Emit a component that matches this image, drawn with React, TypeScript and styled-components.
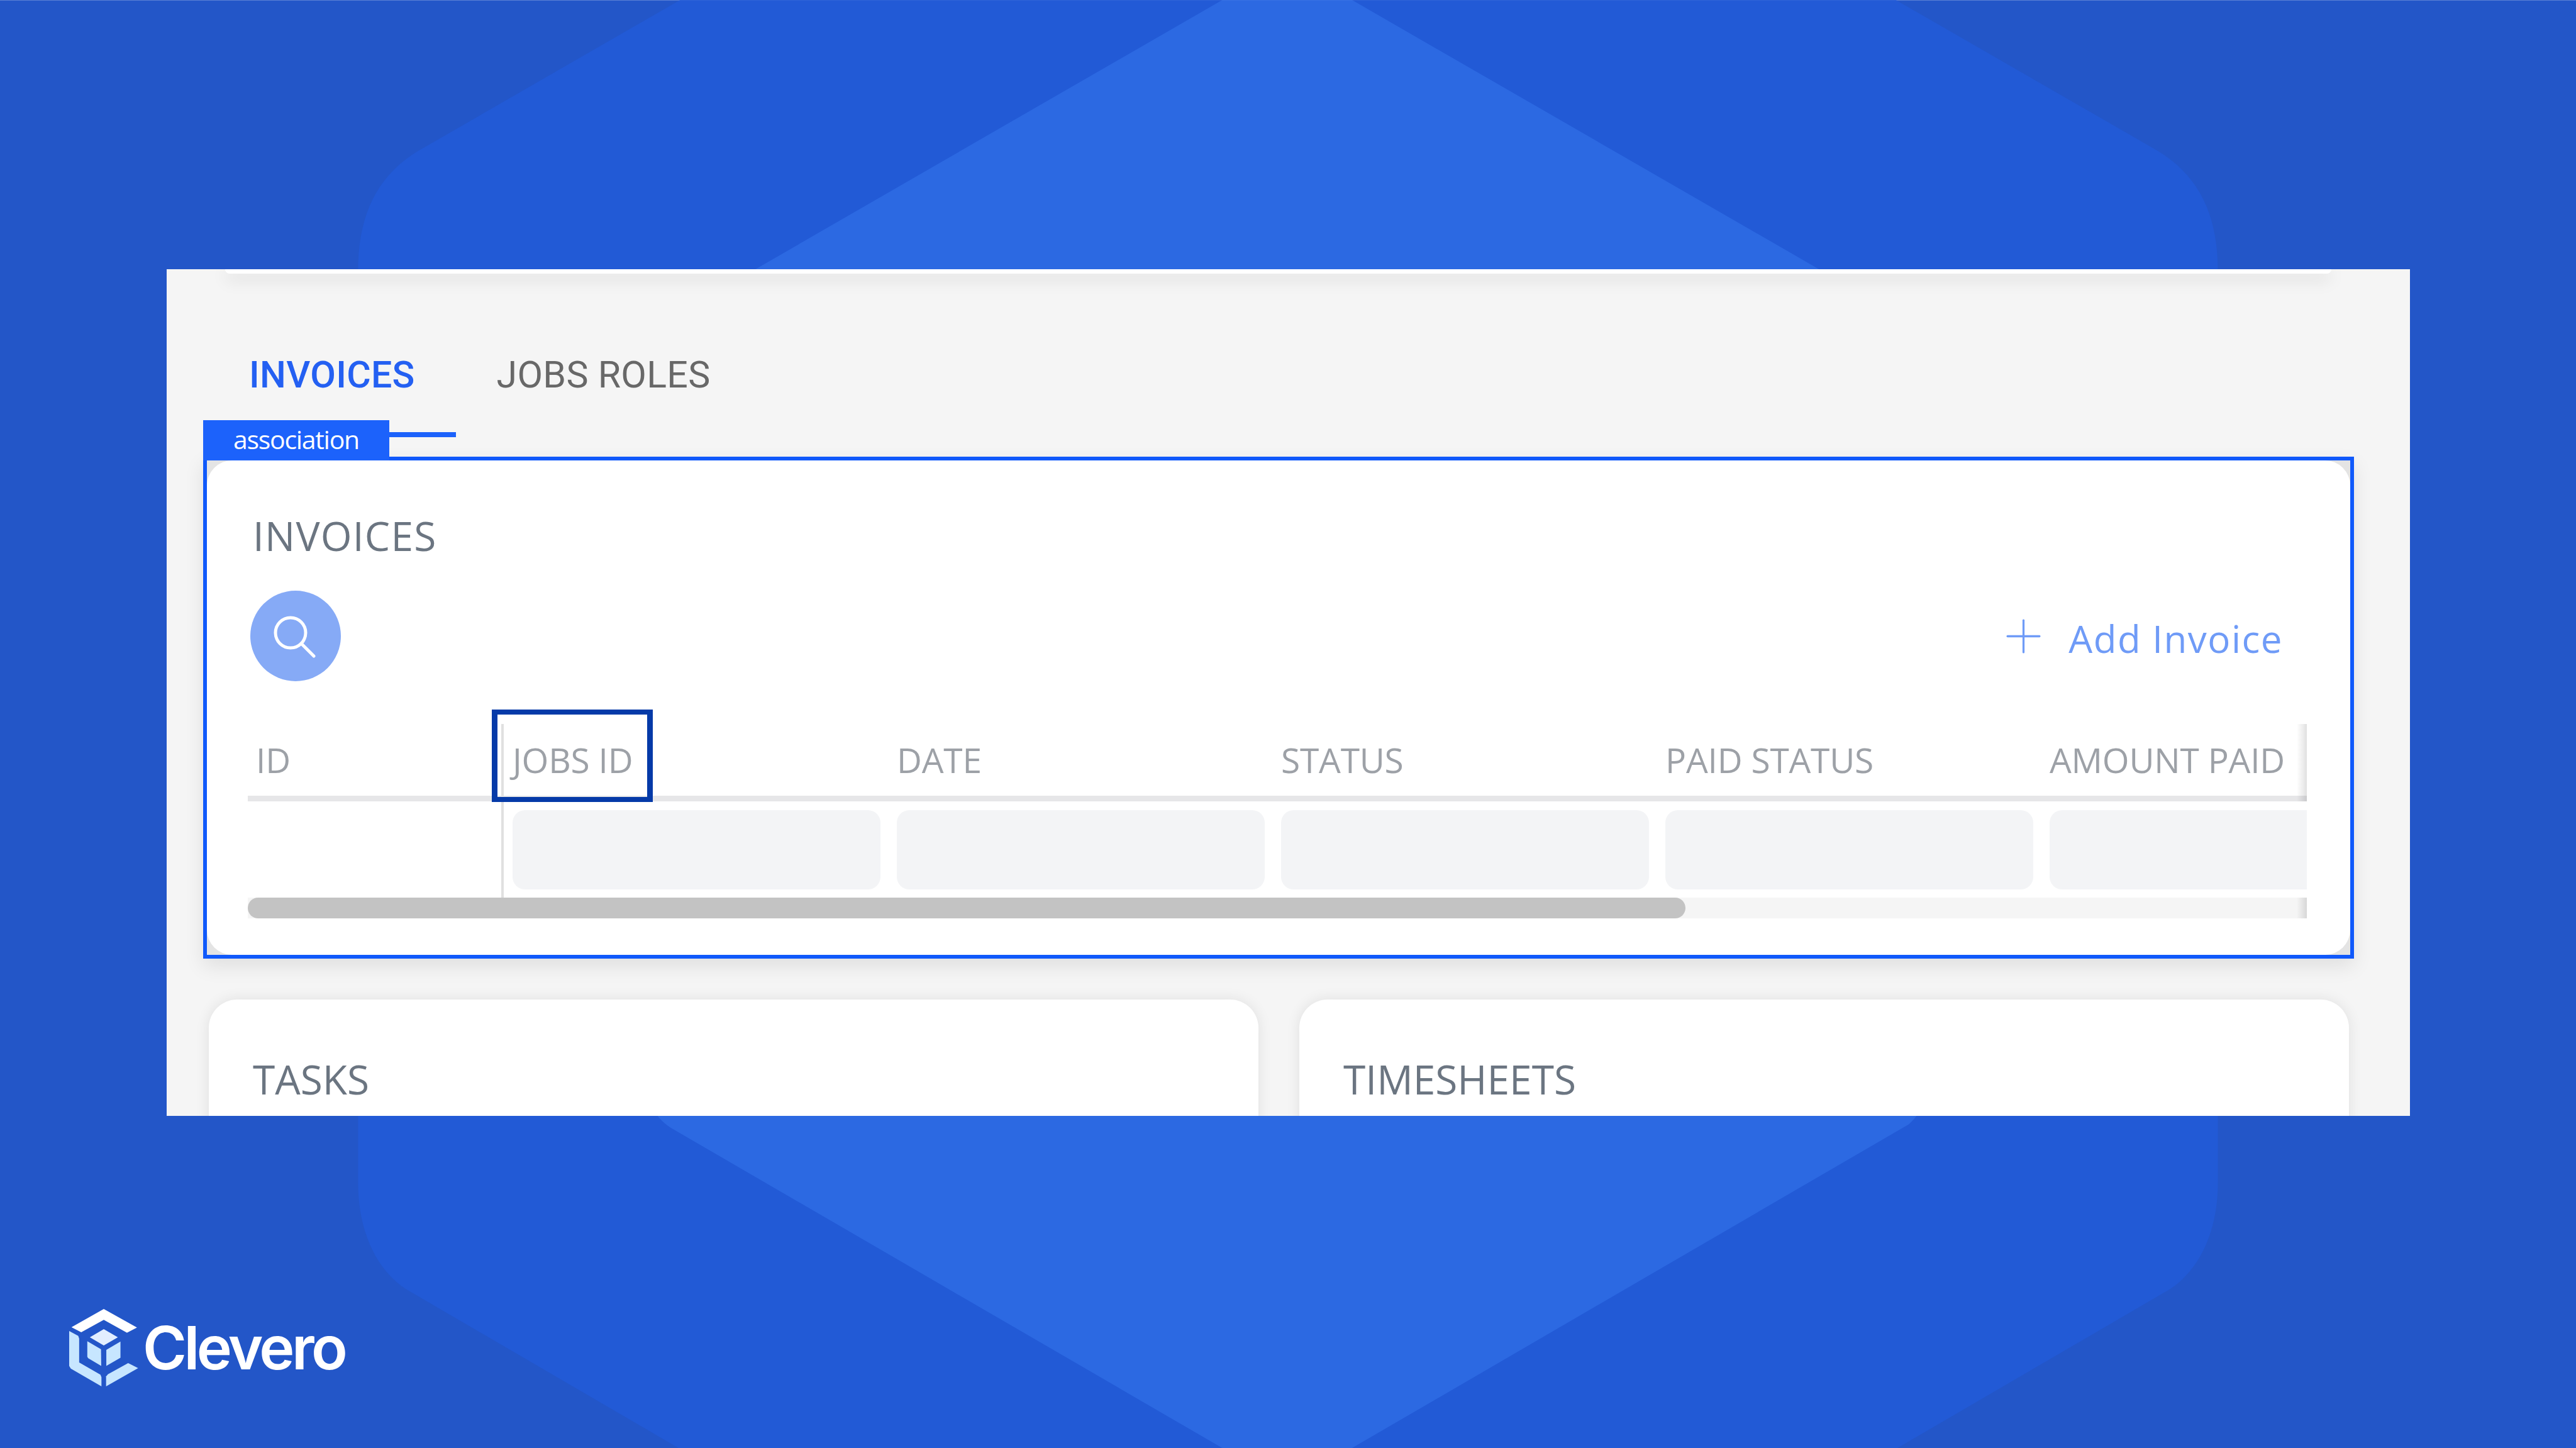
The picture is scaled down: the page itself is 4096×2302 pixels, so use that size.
import React, { FC } from 'react'
import styled, { createGlobalStyle } from 'styled-components'
import { Plus } from 'lucide-react'

const GlobalStyle = createGlobalStyle`
    * {
        box-sizing: border-box;
    }
    html, body {
        margin: 0;
        padding: 0;
        background: #2356c8;
    }
`

const Page = styled.div`
    position: relative;
    width: 4096px;
    height: 2302px;
    padding-top: 428px;
    overflow: hidden;
    background: #2356c8;
    display: flex;
    flex-direction: column;
`

const Backdrop = styled.svg`
    position: absolute;
    top: 0;
    left: 0;
    width: 100%;
    height: 100%;
`

const Panel = styled.div`
    position: relative;
    margin: 0 264px 0 265px;
    height: 1346px;
    overflow: hidden;
    background: #f5f5f5;
`

const TopCard = styled.div`
    height: 7px;
    margin: 0 125px 0 93px;
    background: #fff;
    border-radius: 0 0 14px 14px;
    box-shadow: 0 8px 26px rgba(0, 0, 0, 0.18);
`

const Tabs = styled.div`
    display: flex;
    margin: 120px 0 0 66px;
`

const Tab = styled.div<{ $active?: boolean }>`
    height: 140px;
    padding: 0 65px;
    font-family: 'Roboto', sans-serif;
    font-size: 59px;
    line-height: 82px;
    letter-spacing: 0.3px;
    font-weight: ${(p) => (p.$active ? 500 : 400)};
    color: ${(p) => (p.$active ? '#2460f2' : '#686868')};
    border-bottom: 8px solid ${(p) => (p.$active ? '#1c62fb' : 'transparent')};
`

const Frame = styled.div`
    position: relative;
    width: 3420px;
    height: 798px;
    margin: 31px 0 0 58px;
    border: 6px solid #1059fb;
    background: #e4e4e4;
    box-shadow: 0 12px 30px rgba(0, 0, 0, 0.09);
`

const Badge = styled.div`
    position: absolute;
    top: -64px;
    left: -6px;
    width: 296px;
    height: 64px;
    background: #1c62fb;
    color: #fff;
    font-family: 'Open Sans', sans-serif;
    font-size: 41px;
    letter-spacing: -1.3px;
    line-height: 60px;
    text-align: center;
`

const Card = styled.div`
    height: 100%;
    padding: 75px 69px 0 65px;
    background: #fff;
    border-radius: 40px;
`

const CardTitle = styled.h2`
    margin: 0;
    font-family: 'Open Sans', sans-serif;
    font-size: 64px;
    line-height: 90px;
    font-weight: 400;
    color: #6b7581;
`

const InvoicesTitle = styled(CardTitle)`
    margin-left: 8px;
    letter-spacing: 1.2px;
`

const Toolbar = styled.div`
    display: flex;
    justify-content: space-between;
    align-items: center;
    margin-top: 42px;
    padding: 0 38px 0 4px;
`

const SearchButton = styled.div`
    width: 144px;
    height: 144px;
    border-radius: 50%;
    background: #86aaf6;
    display: flex;
    align-items: center;
    justify-content: center;
`

const SearchIcon = styled.svg`
    width: 72px;
    height: 72px;
    margin: 0 8px 3px 0;
    fill: none;
    stroke: #fff;
    stroke-width: 5;
    stroke-linecap: round;
`

const AddButton = styled.div`
    display: flex;
    align-items: center;
    gap: 28px;
    color: #6f9bf7;
    font-family: 'Open Sans', sans-serif;
    font-size: 60px;
    letter-spacing: 1.5px;
`

const AddLabel = styled.span`
    margin-top: 8px;
`

const Table = styled.div`
    position: relative;
    margin-top: 68px;
    &::after {
        content: '';
        position: absolute;
        top: 0;
        right: 0;
        bottom: 0;
        width: 16px;
        background: linear-gradient(to right, rgba(0, 0, 0, 0), rgba(0, 0, 0, 0.12));
    }
`

const HeadRow = styled.div`
    display: grid;
    grid-template-columns: 407px repeat(4, 611px) 1fr;
    height: 123px;
    border-bottom: 9px solid #e6e6e8;
`

const HeadCell = styled.div<{ $first?: boolean }>`
    position: relative;
    padding: 20px 0 0 ${(p) => (p.$first ? '13px' : '14px')};
    font-family: 'Open Sans', sans-serif;
    font-size: 55px;
    line-height: 74px;
    letter-spacing: -0.2px;
    white-space: nowrap;
    color: #9da1a7;
    border-right: ${(p) => (p.$first ? '4px solid #e0e0e0' : 'none')};
`

const Highlight = styled.div`
    position: absolute;
    top: -23px;
    left: -19px;
    width: 256px;
    height: 147px;
    border-style: solid;
    border-width: 8px 9px;
    border-color: #053aa8;
    z-index: 2;
`

const BodyRow = styled.div`
    position: relative;
    z-index: 1;
    display: grid;
    grid-template-columns: 407px repeat(4, 611px) 1fr;
    height: 153px;
    background: #fff;
`

const BodyCell = styled.div<{ $first?: boolean }>`
    padding: 14px 0 13px 14px;
    border-right: ${(p) => (p.$first ? '4px solid #e0e0e0' : 'none')};
`

const Skeleton = styled.div<{ $last?: boolean }>`
    width: ${(p) => (p.$last ? '100%' : '585px')};
    height: 100%;
    background: #f3f4f6;
    border-radius: ${(p) => (p.$last ? '20px 0 0 20px' : '20px')};
`

const ScrollTrack = styled.div`
    height: 33px;
    background: #f5f5f5;
`

const ScrollThumb = styled.div`
    width: 2286px;
    height: 100%;
    background: #c3c3c3;
    border-radius: 17px;
`

const LowerRow = styled.div`
    display: flex;
    gap: 65px;
    margin: 65px 0 0 67px;
`

const LowerCard = styled.div`
    width: 1669px;
    height: 400px;
    padding: 82px 70px 0;
    background: #fff;
    border-radius: 45px;
    box-shadow: 0 0 22px rgba(0, 0, 0, 0.09);
`

const Brand = styled.div`
    position: relative;
    display: flex;
    align-items: center;
    gap: 7px;
    margin: 307px 0 0 110px;
    color: #fff;
    font-family: 'Inter', sans-serif;
    font-size: 95px;
    line-height: 123px;
    font-weight: 600;
    letter-spacing: -4.5px;
`

const LOGO_BLUE = '#c7e6ff'

const Logo: FC = () => (
    <svg width="110" height="123" viewBox="0 0 152 170">
        <path fill="#fff" d="M76 0L149 40.6L127 52.3L76 24L26.5 51L5 40Z" />
        <path fill="#e2eeff" d="M76 44.3L107 62.3L76 80L45.4 62.3Z" />
        <path fill={LOGO_BLUE} d="M39.8 71L69.9 88.3L70.4 125L41.8 108.3L39.8 105Z" />
        <path fill={LOGO_BLUE} d="M112.7 71.6L81.6 90V125L112.7 107Z" />
        <path fill={LOGO_BLUE} d="M0 48.3L19.9 59L21.9 65V117.6L68.8 144.3L70.9 150V170L3.5 131L0 125Z" />
        <path fill={LOGO_BLUE} d="M81.1 170V148.3L85.2 143.3L129.6 119L151.5 130Z" />
    </svg>
)

const columns = ['ID', 'JOBS ID', 'DATE', 'STATUS', 'PAID STATUS', 'AMOUNT PAID']

const App: FC = () => {
    return (
        <Page>
            <GlobalStyle />
            <Backdrop viewBox="0 0 1568 881" preserveAspectRatio="none">
                <rect width="1568" height="0.4" fill="#fff" opacity="0.2" />
                <path
                    fill="#225ad6"
                    d="M414 0H1154L1312 91C1338 106 1350 130 1350 165V720C1350 750 1338 775 1318 786L1155 881H413L250 786C230 775 218 750 218 720V165C218 130 230 106 256 91Z"
                />
                <path
                    fill="#2c69e2"
                    d="M744 0H823L1170 200V672C1169 677 1166 680 1162 684L823 881H744L408 686C402 682 398 677 397 672V200Z"
                />
                <rect width="1568" height="0.4" fill="#fff" opacity="0.06" />
            </Backdrop>
            <Panel>
                <TopCard />
                <Tabs>
                    <Tab $active>INVOICES</Tab>
                    <Tab>JOBS ROLES</Tab>
                </Tabs>
                <Frame>
                    <Badge>association</Badge>
                    <Card>
                        <InvoicesTitle>INVOICES</InvoicesTitle>
                        <Toolbar>
                            <SearchButton>
                                <SearchIcon viewBox="0 0 72 72">
                                    <circle cx="32" cy="32" r="24" />
                                    <line x1="49" y1="49" x2="69" y2="69" />
                                </SearchIcon>
                            </SearchButton>
                            <AddButton>
                                <Plus size={87} strokeWidth={0.9} />
                                <AddLabel>Add Invoice</AddLabel>
                            </AddButton>
                        </Toolbar>
                        <Table>
                            <HeadRow>
                                {columns.map((name, i) => (
                                    <HeadCell key={name} $first={i === 0}>
                                        {name}
                                        {name === 'JOBS ID' && <Highlight />}
                                    </HeadCell>
                                ))}
                            </HeadRow>
                            <BodyRow>
                                {columns.map((name, i) => (
                                    <BodyCell key={name} $first={i === 0}>
                                        {i > 0 && <Skeleton $last={i === columns.length - 1} />}
                                    </BodyCell>
                                ))}
                            </BodyRow>
                            <ScrollTrack>
                                <ScrollThumb />
                            </ScrollTrack>
                        </Table>
                    </Card>
                </Frame>
                <LowerRow>
                    <LowerCard>
                        <CardTitle>TASKS</CardTitle>
                    </LowerCard>
                    <LowerCard>
                        <CardTitle>TIMESHEETS</CardTitle>
                    </LowerCard>
                </LowerRow>
            </Panel>
            <Brand>
                <Logo />
                Clevero
            </Brand>
        </Page>
    )
}

export default App
